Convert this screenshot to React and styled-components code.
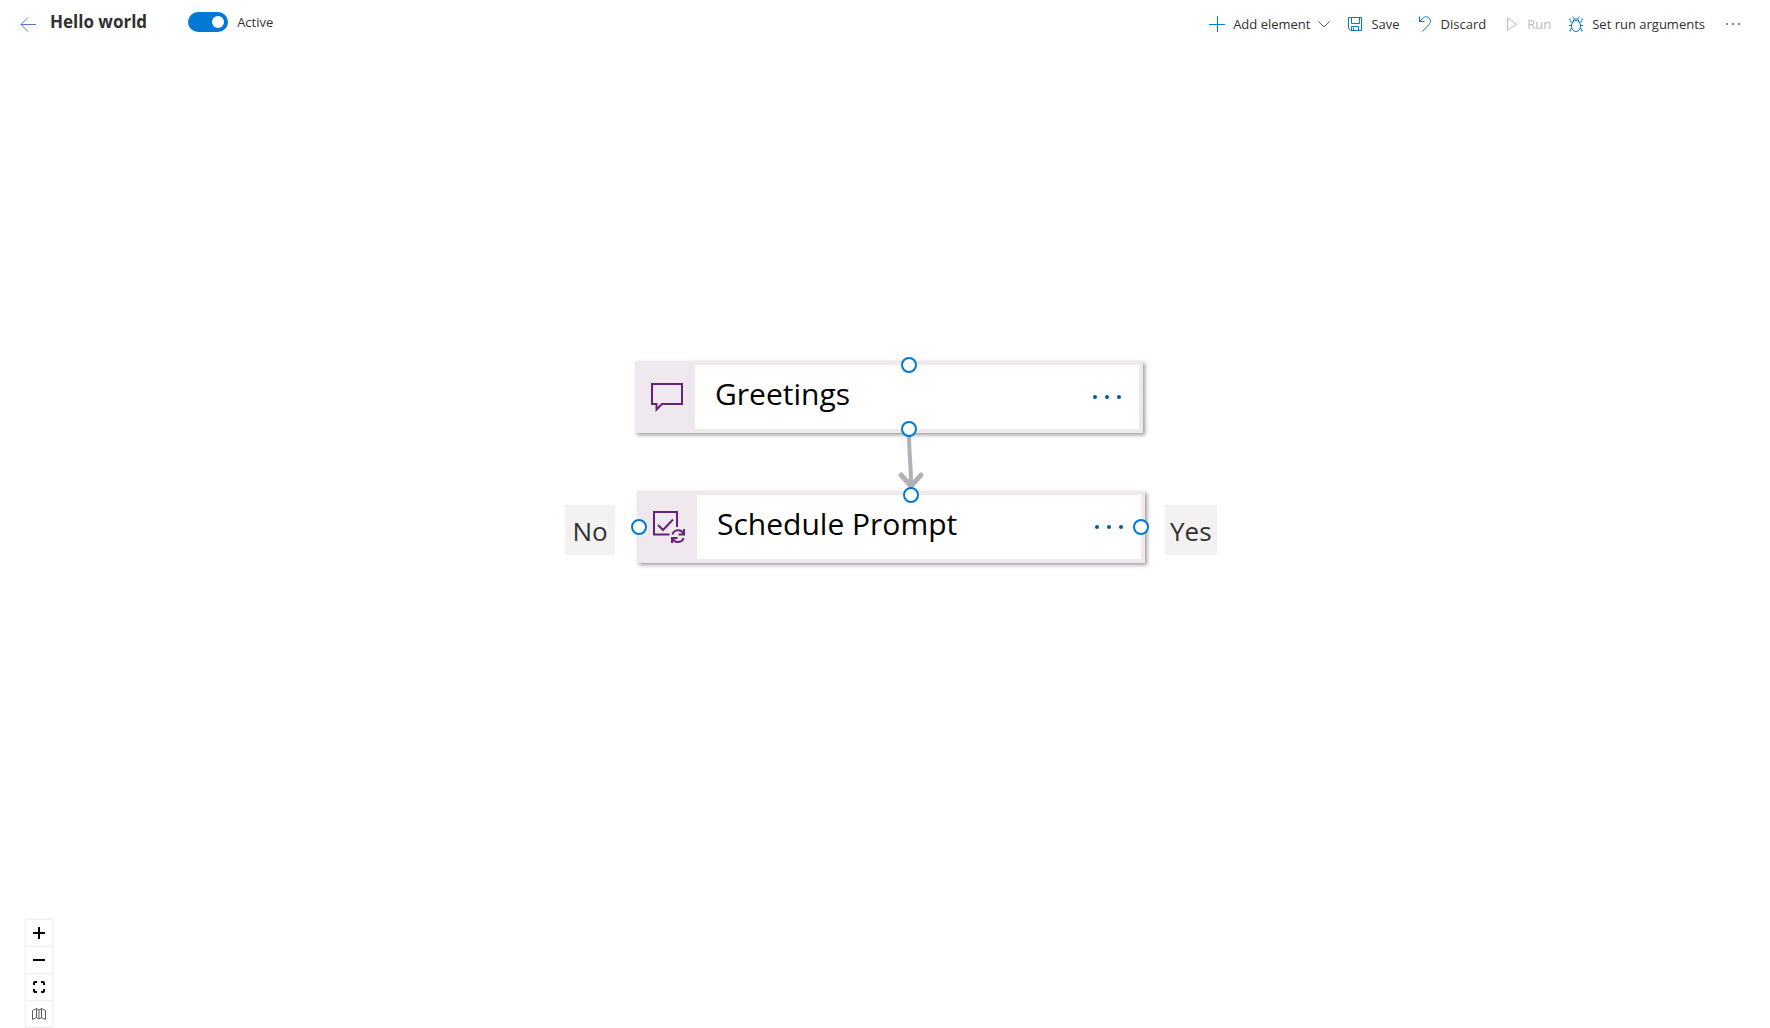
import React, { useState } from 'react';
import styled, { createGlobalStyle } from 'styled-components';

const GlobalStyle = createGlobalStyle`
  * { box-sizing: border-box; }
  body {
    margin: 0;
    background: #fff;
    color: #323130;
    font-family: "Open Sans", "Noto Sans", sans-serif;
    font-size: 13px;
  }
  button {
    font: inherit;
    color: inherit;
    background: none;
    border: 0;
    padding: 0;
    cursor: pointer;
  }
`;

const Page = styled.div`
  display: flex;
  flex-direction: column;
  min-height: 100vh;
`;

const Header = styled.header`
  display: flex;
  align-items: flex-start;
  justify-content: space-between;
  padding: 0 28px 0 20px;
`;

const TitleArea = styled.div`
  display: flex;
  align-items: center;
  height: 44px;
`;

const BackButton = styled.button`
  display: flex;
  margin: 4px 14px 0 0;
`;

const Title = styled.h1`
  margin: 0;
  font-size: 17px;
  line-height: 24px;
  font-weight: 700;
`;

const ToggleLabel = styled.label`
  display: flex;
  align-items: center;
  gap: 9px;
  margin-left: 41px;
  line-height: 20px;
`;

const Toggle = styled.input`
  appearance: none;
  display: flex;
  align-items: center;
  justify-content: ${({ checked }) => (checked ? 'flex-end' : 'flex-start')};
  width: 40px;
  height: 20px;
  margin: 0;
  padding: 0 4px;
  border-radius: 10px;
  background: ${({ checked }) => (checked ? '#0078d4' : '#8a8886')};
  &::before {
    content: "";
    width: 12px;
    height: 12px;
    border-radius: 50%;
    background: #fff;
  }
`;

const CommandBar = styled.nav`
  display: flex;
  align-items: center;
  gap: 17px;
  height: 48px;
`;

const Command = styled.button`
  display: flex;
  align-items: center;
  gap: 8px;
  line-height: 20px;
  white-space: nowrap;
  &:disabled {
    color: #bebbb8;
    cursor: default;
  }
`;

const Canvas = styled.main`
  position: relative;
  flex: 1;
`;

const Edges = styled.svg`
  position: absolute;
  inset: 0;
  width: 100%;
  height: 100%;
`;

const Node = styled.section`
  position: absolute;
  left: ${({ $x }) => $x}px;
  top: ${({ $y }) => $y}px;
  display: flex;
  width: 508px;
  height: 72px;
  padding: 4px;
  background: #efe8ef;
  box-shadow: 2px 2px 4px rgba(0, 0, 0, 0.4);
`;

const NodeIcon = styled.div`
  display: flex;
  align-items: center;
  justify-content: center;
  width: 56px;
`;

const NodeBody = styled.div`
  display: flex;
  flex: 1;
  align-items: center;
  justify-content: space-between;
  padding: 0 16px 0 20px;
  background: #fff;
`;

const NodeTitle = styled.h2`
  margin: 0;
  padding-bottom: 6px;
  color: #000;
  font-size: 30px;
  line-height: 40px;
  font-weight: 400;
`;

const MenuButton = styled.button`
  display: flex;
`;

const sides = {
  top: 'left: 266px; top: -4px;',
  bottom: 'left: 266px; bottom: -4px;',
  left: 'left: -6px; top: 28px;',
  right: 'right: -4px; top: 28px;',
};

const Handle = styled.span`
  position: absolute;
  ${({ $side }) => sides[$side]}
  width: 16px;
  height: 16px;
  border: 2px solid #0078d4;
  border-radius: 50%;
  background: #fff;
`;

const BranchLabel = styled.div`
  position: absolute;
  left: ${({ $x }) => $x}px;
  top: ${({ $y }) => $y}px;
  min-width: 50px;
  padding: 6px 5px 4px;
  background: #f3f2f1;
  font-size: 26px;
  line-height: 40px;
  text-align: center;
`;

const Controls = styled.div`
  position: absolute;
  left: 26px;
  bottom: 0;
  display: flex;
  flex-direction: column;
  box-shadow: 0 0 2px 1px rgba(0, 0, 0, 0.08);
`;

const ControlButton = styled.button`
  display: flex;
  align-items: center;
  justify-content: center;
  width: 26px;
  height: 27px;
  border-bottom: 1px solid #eee;
`;

const Icon = ({ size = 16, color = '#0078d4', width = 1, children }) => (
  <svg
    width={size}
    height={size}
    viewBox={`0 0 ${size} ${size}`}
    fill="none"
    stroke={color}
    strokeWidth={width}
    aria-hidden="true"
  >
    {children}
  </svg>
);

const MessageIcon = () => (
  <Icon size={32} color="#68217a" width={2}>
    <path d="M1 3H31V23H11L5.500 28.500V23H1Z" />
  </Icon>
);

const ScheduleIcon = () => (
  <Icon size={32} color="#68217a" width={2}>
    <path d="M24 16V1H1V23.500H16.500" />
    <path d="M5 14L10 19L20 8.500" />
    <path d="M19.500 23.500C21 18.500 28 17.500 30.500 23M31 18V23.500H25.500M30.500 27C29 32 22 32.500 19.500 27.500M19 32V27H24.500" />
  </Icon>
);

const nodes = [
  { id: 'greetings', title: 'Greetings', x: 635, y: 313, icon: <MessageIcon />, handles: ['top', 'bottom'] },
  { id: 'schedule', title: 'Schedule Prompt', x: 637, y: 443, icon: <ScheduleIcon />, handles: ['top', 'left', 'right'] },
];

const App = () => {
  const [active, setActive] = useState(true);

  return (
    <Page>
      <GlobalStyle />
      <Header>
        <TitleArea>
          <BackButton aria-label="Back">
            <Icon color="#4f78c8">
              <path d="M16 8.500H1M8 1.500L1 8.500L8 15.500" />
            </Icon>
          </BackButton>
          <Title>Hello world</Title>
          <ToggleLabel>
            <Toggle
              type="checkbox"
              role="switch"
              checked={active}
              onChange={e => setActive(e.target.checked)}
            />
            Active
          </ToggleLabel>
        </TitleArea>
        <CommandBar>
          <Command>
            <Icon><path d="M0 8.500H16M8.500 0V16" /></Icon>
            Add element
            <Icon size={12} color="#605e5c"><path d="M0.500 3.500L6 9L11.500 3.500" /></Icon>
          </Command>
          <Command>
            <Icon>
              <path d="M1.500 1.500H14.500V14.500H3.500L1.500 12.500Z" />
              <path d="M4.500 1.500V7.500H12.500V1.500M4.500 14.500V10.500H11.500V14.500M6.500 12V14.500" />
            </Icon>
            Save
          </Command>
          <Command>
            <Icon><path d="M2.500 0.500V5.500H7.500M2.500 5.500L5 3C7 0.500 10 0 12 2C14.500 4.500 13.500 7 12 8.500L5.500 15.500" /></Icon>
            Discard
          </Command>
          <Command disabled>
            <Icon color="#bebbb8"><path d="M4.500 2V14.500L13.500 8.200Z" /></Icon>
            Run
          </Command>
          <Command>
            <Icon>
              <ellipse cx="8" cy="10" rx="4.500" ry="5.500" />
              <path d="M5.500 5.500V4C5.500 2.500 10.500 2.500 10.500 4V5.500M5 0.500C5 2 5.500 2.500 6.500 3M11 0.500C11 2 10.500 2.500 9.500 3" />
              <path d="M2 2.500V4.500Q2 6 4.500 6.500M14 2.500V4.500Q14 6 11.500 6.500M1 9.500H3.500M12.500 9.500H15M4 12Q2 12.500 2 15.500M12 12Q14 12.500 14 15.500" />
            </Icon>
            Set run arguments
          </Command>
          <Command aria-label="More commands">
            <svg width="20" height="16" viewBox="0 0 20 16" fill="#605e5c" aria-hidden="true">
              <circle cx="5" cy="8" r="1" />
              <circle cx="11" cy="8" r="1" />
              <circle cx="17" cy="8" r="1" />
            </svg>
          </Command>
        </CommandBar>
      </Header>

      <Canvas>
        <Edges fill="none" stroke="#b1b1b7" strokeLinecap="round" strokeLinejoin="round" aria-hidden="true">
          <path d="M909 385C909 411 911 411 911 437" strokeWidth="4" />
          <path d="M901 427L911 438L921 427" strokeWidth="5" />
        </Edges>
        {nodes.map(node => (
          <Node key={node.id} $x={node.x} $y={node.y}>
            <NodeIcon>{node.icon}</NodeIcon>
            <NodeBody>
              <NodeTitle>{node.title}</NodeTitle>
              <MenuButton aria-label={`${node.title} menu`}>
                <svg width="32" height="32" viewBox="0 0 32 32" fill="#005a9e" aria-hidden="true">
                  <circle cx="4" cy="16" r="2" />
                  <circle cx="16" cy="16" r="2" />
                  <circle cx="28" cy="16" r="2" />
                </svg>
              </MenuButton>
            </NodeBody>
            {node.handles.map(side => <Handle key={side} $side={side} />)}
          </Node>
        ))}
        <BranchLabel $x={565} $y={457}>No</BranchLabel>
        <BranchLabel $x={1165} $y={457}>Yes</BranchLabel>

        <Controls>
          <ControlButton aria-label="Zoom in">
            <Icon size={12} color="#000" width={2}><path d="M0 6H12M6 0V12" /></Icon>
          </ControlButton>
          <ControlButton aria-label="Zoom out">
            <Icon size={12} color="#000" width={2}><path d="M0 6H12" /></Icon>
          </ControlButton>
          <ControlButton aria-label="Fit view">
            <Icon size={12} color="#000" width={2}>
              <path d="M1 4V2Q1 1 2 1H4M8 1H10Q11 1 11 2V4M11 8V10Q11 11 10 11H8M4 11H2Q1 11 1 10V8" />
            </Icon>
          </ControlButton>
          <ControlButton aria-label="Toggle minimap">
            <Icon size={14} color="#605e5c">
              <path d="M0.500 3.500L4.500 1.500V10.500L0.500 12.500ZM4.500 1.500L7 3L9.500 1.500L13.500 3.500V12.500L9.500 10.500L7 12L4.500 10.500M7 3V12M9.500 1.500V10.500" />
            </Icon>
          </ControlButton>
        </Controls>
      </Canvas>
    </Page>
  );
};

export default App;
